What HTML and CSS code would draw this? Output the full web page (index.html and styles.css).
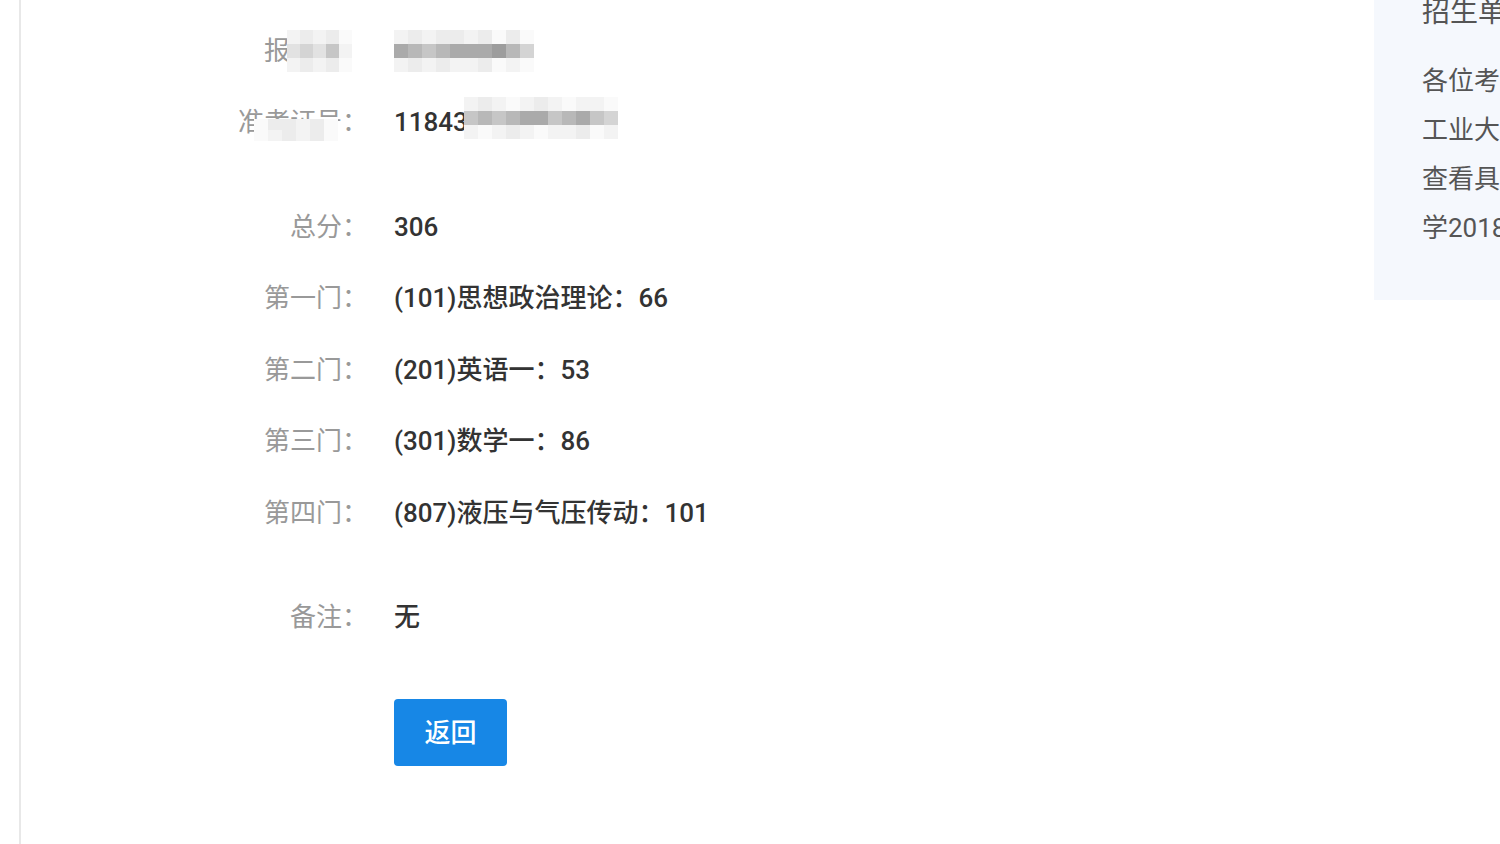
FILE: index.html
```html
<!DOCTYPE html>
<html lang="zh-CN">
<head>
    <meta charset="UTF-8">
    <meta name="viewport" content="width=device-width, initial-scale=1.0">
    <title>成绩查询</title>
    <link rel="stylesheet" href="styles.css">
</head>
<body>
    <div class="main">
        <div class="score-list">
            <div class="row">
                <div class="label">报名号：
                    <div class="mosaic label-mosaic-a">
                        <span class="g2"></span><span class="g3"></span><span class="g2"></span><span class="g3"></span><span class="g1"></span>
                        <span class="g4"></span><span class="g5"></span><span class="g4"></span><span class="g6"></span><span class="g2"></span>
                        <span class="g2"></span><span class="g3"></span><span class="g2"></span><span class="g3"></span><span class="g1"></span>
                    </div>
                </div>
                <div class="value">&nbsp;
                    <div class="mosaic value-mosaic-a">
                        <span class="g2"></span><span class="g3"></span><span class="g2"></span><span class="g3"></span><span class="g3"></span><span class="g2"></span><span class="g3"></span><span class="g1"></span><span class="g3"></span><span class="g1"></span>
                        <span class="g8"></span><span class="g7"></span><span class="g6"></span><span class="g7"></span><span class="g8"></span><span class="g8"></span><span class="g8"></span><span class="g9"></span><span class="g7"></span><span class="g5"></span>
                        <span class="g2"></span><span class="g3"></span><span class="g2"></span><span class="g3"></span><span class="g2"></span><span class="g2"></span><span class="g3"></span><span class="g1"></span><span class="g2"></span><span class="g1"></span>
                    </div>
                </div>
            </div>
            <div class="row">
                <div class="label">准考证号：
                    <div class="mosaic label-mosaic-b">
                        <span class="g1"></span><span class="g3"></span><span class="g3"></span><span class="g2"></span><span class="g3"></span><span class="g1"></span>
                        <span class="g1"></span><span class="g2"></span><span class="g3"></span><span class="g2"></span><span class="g3"></span><span class="g1"></span>
                    </div>
                </div>
                <div class="value">11843
                    <div class="mosaic value-mosaic-b">
                        <span class="g0"></span><span class="g0"></span><span class="g0"></span><span class="g0"></span><span class="g0"></span><span class="g2"></span><span class="g3"></span><span class="g2"></span><span class="g1"></span><span class="g2"></span><span class="g3"></span><span class="g2"></span><span class="g1"></span><span class="g2"></span><span class="g2"></span><span class="g1"></span>
                        <span class="g0"></span><span class="g0"></span><span class="g0"></span><span class="g0"></span><span class="g0"></span><span class="g6"></span><span class="g7"></span><span class="g6"></span><span class="g7"></span><span class="g8"></span><span class="g8"></span><span class="g6"></span><span class="g7"></span><span class="g8"></span><span class="g6"></span><span class="g5"></span>
                        <span class="g0"></span><span class="g0"></span><span class="g0"></span><span class="g0"></span><span class="g0"></span><span class="g2"></span><span class="g1"></span><span class="g2"></span><span class="g3"></span><span class="g2"></span><span class="g1"></span><span class="g2"></span><span class="g2"></span><span class="g3"></span><span class="g1"></span><span class="g2"></span>
                    </div>
                </div>
            </div>

            <div class="row spaced">
                <div class="label">总分：</div>
                <div class="value">306</div>
            </div>
            <div class="row">
                <div class="label">第一门：</div>
                <div class="value">(101)思想政治理论：66</div>
            </div>
            <div class="row">
                <div class="label">第二门：</div>
                <div class="value">(201)英语一：53</div>
            </div>
            <div class="row">
                <div class="label">第三门：</div>
                <div class="value">(301)数学一：86</div>
            </div>
            <div class="row">
                <div class="label">第四门：</div>
                <div class="value">(807)液压与气压传动：101</div>
            </div>

            <div class="row spaced">
                <div class="label">备注：</div>
                <div class="value">无</div>
            </div>

            <div class="actions">
                <button class="back-button">返回</button>
            </div>
        </div>
    </div>

    <div class="side">
        <h3>招生单位公告</h3>
        <p>各位考生：请登录北京</p>
        <p>工业大学研究生招生网</p>
        <p>查看具体复试安排，北京工业大</p>
        <p>学2018年硕士研究生复试通知</p>
    </div>
</body>
</html>
```

FILE: styles.css
```css
html, body {
    margin: 0;
    padding: 0;
    height: 100%;
}
body {
    font-family: Roboto, 'Noto Sans CJK SC', sans-serif;
    background: white;
    color: #333;
    display: flex;
    overflow: hidden;
}
.main {
    flex: 0 0 1353px;
    margin-left: 19px;
    border-left: 2px solid #e8e8e8;
    min-height: 100%;
}
.score-list {
    padding-top: 15px;
    padding-left: 147px;
}
.row {
    display: grid;
    grid-template-columns: 200px 1fr;
    column-gap: 26px;
    height: 71.5px;
    align-items: center;
    font-size: 26px;
    line-height: 36px;
}
.row.spaced {
    margin-top: 33px;
}
.label {
    position: relative;
    text-align: right;
    color: #999;
    white-space: nowrap;
}
.value {
    position: relative;
    color: #333;
    font-weight: 500;
    white-space: nowrap;
}
.actions {
    margin-top: 46px;
    padding-left: 226px;
}
.back-button {
    width: 113px;
    height: 67px;
    padding: 0 0 5px;
    background-color: #1787e6;
    color: white;
    border: none;
    border-radius: 4px;
    font-family: Roboto, 'Noto Sans CJK SC', sans-serif;
    font-size: 26px;
    font-weight: 500;
    cursor: pointer;
}

/* 打码遮挡 */
.mosaic {
    position: absolute;
    display: grid;
    grid-auto-rows: 14px;
}
.label-mosaic-a {
    right: 16px;
    top: -3px;
    grid-template-columns: repeat(5, 13px);
}
.value-mosaic-a {
    left: 0;
    top: -3px;
    grid-template-columns: repeat(10, 14px);
}
.label-mosaic-b {
    right: 30px;
    top: 15px;
    grid-template-columns: repeat(6, 14px);
    grid-auto-rows: 11px;
}
.value-mosaic-b {
    left: 0;
    top: -7px;
    grid-template-columns: repeat(16, 14px);
}
.g0 { background: transparent; }
.g1 { background: #fafafa; }
.g2 { background: #f3f3f3; }
.g3 { background: #ececec; }
.g4 { background: #e2e2e2; }
.g5 { background: #d4d4d4; }
.g6 { background: #c6c6c6; }
.g7 { background: #b8b8b8; }
.g8 { background: #aaaaaa; }
.g9 { background: #9d9d9d; }

.side {
    width: 400px;
    flex-shrink: 0;
    height: 300px;
    box-sizing: border-box;
    background: #f5f8fd;
    padding: 0 0 0 48px;
    color: #555;
    white-space: nowrap;
    overflow: hidden;
}
.side h3 {
    margin: -1px 0 30px;
    font-size: 28px;
    font-weight: normal;
    line-height: 28px;
    color: #555;
}
.side p {
    margin: 0;
    font-size: 26px;
    line-height: 49px;
}
```
